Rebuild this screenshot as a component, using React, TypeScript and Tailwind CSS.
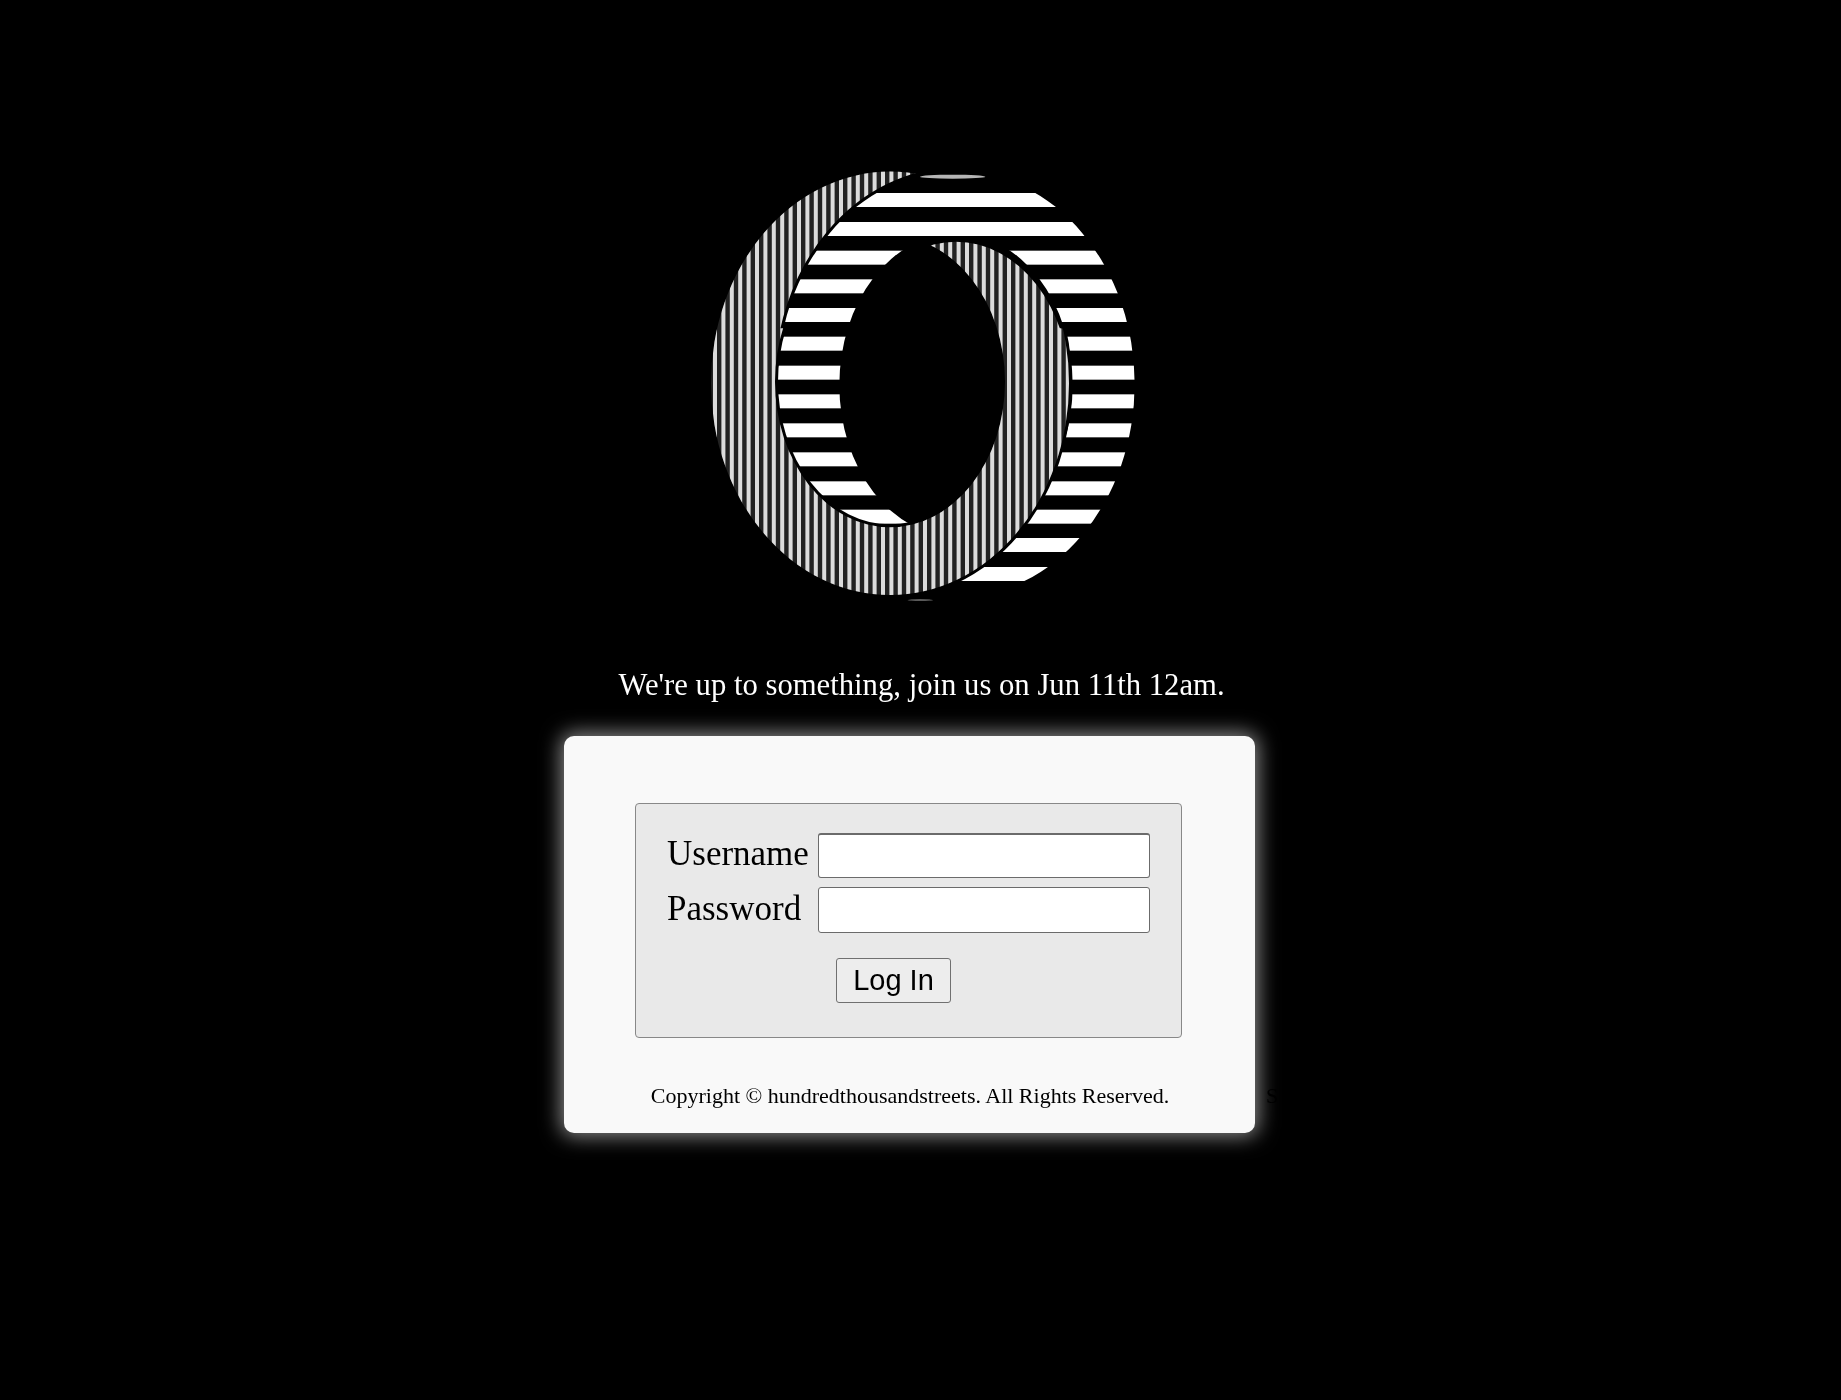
const stripesH = [150, 237, 323, 409, 495, 581, 668, 754, 841, 928, 1015, 1100, 1185, 1272];

const hOuter = "M259 702a536 640 0 1 0 1072 0a536 640 0 1 0 -1072 0Z";
const hHole = "M445 705a350 455 0 1 0 700 0a350 455 0 1 0 -700 0Z";
const hCrescent = "M453 717a342 442 0 1 0 684 0a342 442 0 1 0 -684 0Z";
const vRing = "M60 700a537 635 0 1 0 1074 0a537 635 0 1 0 -1074 0ZM252 695a345 437 0 1 0 690 0a345 437 0 1 0 -690 0Z";

function stripesV() {
  const xs: number[] = [];
  for (let x = 72; x < 1140; x += 25.2) xs.push(x);
  return xs;
}

function HStripes() {
  return (
    <g mask="url(#h-ring)">
      {stripesH.map((y) => (
        <rect key={y} x="200" y={y - 21} width="1200" height="42" fill="#ffffff" />
      ))}
    </g>
  );
}

function Logo() {
  return (
    <svg viewBox="-30 0 1440 1440" className="h-[480px] w-[480px] shrink-0">
      <defs>
        <mask id="h-ring">
          <path fillRule="evenodd" fill="white" d={hOuter + hHole} />
          <rect x="600" y="216" width="400" height="42" fill="white" />
        </mask>
        <mask id="v-ring">
          <path fillRule="evenodd" fill="white" d={vRing} />
        </mask>
        <clipPath id="top-part">
          <rect x="0" y="0" width="1440" height="535" />
        </clipPath>
      </defs>

      <HStripes />

      {/* vertical ring sits over the horizontal one in the lower part */}
      <path fill="none" stroke="#000000" strokeWidth="18" d={vRing} />
      <path fillRule="evenodd" fill="#222222" d={vRing} />
      <g mask="url(#v-ring)">
        {stripesV().map((x) => (
          <rect key={x} x={x - 6} y="0" width="12" height="1440" fill="#dcdcdc" />
        ))}
      </g>

      {/* and under it in the upper part */}
      <g clipPath="url(#top-part)">
        <path fillRule="evenodd" fill="#000000" stroke="#000000" strokeWidth="18" d={hOuter + hHole} />
        <path fillRule="evenodd" fill="#000000" d={hHole + hCrescent} />
        <HStripes />
      </g>
      <ellipse cx="785" cy="80" rx="98" ry="6" fill="#b5b5b5" />
      <ellipse cx="688" cy="1350" rx="38" ry="2.5" fill="#777777" />
    </svg>
  );
}

export default function App() {
  return (
    <div
      className="flex min-h-[1400px] flex-col items-center bg-black pt-[150px] blur-[0.5px]"
      style={{ fontFamily: '"Liberation Serif", serif' }}
    >
      <Logo />
      <p className="mt-[35px] ml-[2px] text-[30.7px] leading-[40px] text-white">
        We're up to something, join us on Jun 11th 12am.
      </p>
      <div className="relative mt-[31px] -ml-[22px] h-[397px] w-[691px] rounded-[10px] bg-[#f9f9f9] pt-[67px] pl-[71px] shadow-[0_0_20px_3px_rgba(255,255,255,0.55)]">
        <form className="flex h-[235px] w-[547px] flex-col rounded-[4px] border border-[#888888] bg-[#e9e9e9] pt-[29px] pl-[31px] text-black">
          <div className="flex h-[45px] items-center">
            <label className="-mt-[4px] w-[151px] text-[35px] leading-[45px]">Username</label>
            <input type="text" className="h-[45px] w-[332px] rounded-[3px] border-[1.5px] border-t-2 border-[#6b6b6b] bg-white" />
          </div>
          <div className="mt-[9px] flex h-[46px] items-center">
            <label className="-mt-[4px] w-[151px] text-[35px] leading-[45px]">Password</label>
            <input type="password" className="h-[46px] w-[332px] rounded-[3px] border-[1.5px] border-[#6b6b6b] bg-white" />
          </div>
          <button
            type="button"
            className="mt-[25px] ml-[169px] h-[45px] w-[115px] rounded-[3px] border-[1.5px] border-[#707070] bg-[#ededed] text-[29px] text-black"
            style={{ fontFamily: '"Liberation Sans", sans-serif' }}
          >
            Log In
          </button>
        </form>
        <p className="mt-[44px] -ml-[5px] w-[560px] text-center text-[22px] leading-[28px] whitespace-nowrap text-black">
          Copyright © hundredthousandstreets. All Rights Reserved.
        </p>
        <span className="absolute top-[346px] left-[702px] text-[22px] leading-[28px] text-black">S</span>
      </div>
    </div>
  );
}
